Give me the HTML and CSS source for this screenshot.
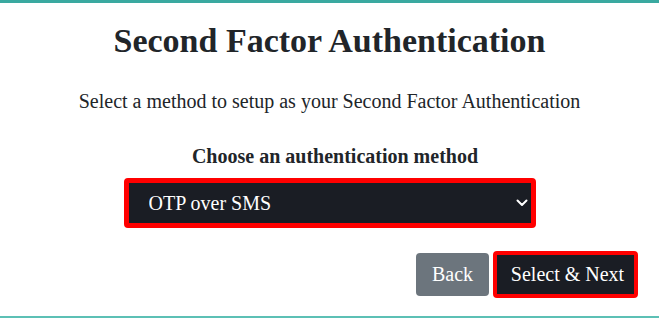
FILE: index.html
```html
<!DOCTYPE html>
<html>
<head>
<meta charset="utf-8">
<link rel="stylesheet" href="styles.css">
</head>
<body>
<div class="page">
  <h1 class="title">Second Factor Authentication</h1>
  <p class="subtitle">Select a method to setup as your Second Factor Authentication</p>
  <div class="field">
    <label class="label" for="method">Choose an authentication method</label>
    <div class="select-wrap">
      <select id="method" class="select">
        <option>OTP over SMS</option>
      </select>
      <svg class="chevron" width="12" height="8" viewBox="0 0 12 8"><path d="M1.5 1.5 L6 6 L10.5 1.5" fill="none" stroke="#fff" stroke-width="2" stroke-linecap="round" stroke-linejoin="round"/></svg>
    </div>
  </div>
  <div class="actions">
    <button class="btn btn-back">Back</button>
    <button class="btn btn-next">Select &amp; Next</button>
  </div>
</div>
</body>
</html>
```

FILE: styles.css
```css
html, body {
  margin: 0;
  padding: 0;
  background: #fff;
}
.page {
  box-sizing: border-box;
  width: 659px;
  height: 318px;
  border-top: 3px solid #3aa9a0;
  border-bottom: 2px solid #5cc0b5;
  font-family: "Liberation Serif", "Times New Roman", serif;
  color: #212529;
  display: flex;
  flex-direction: column;
  align-items: center;
  overflow: hidden;
}
.title {
  margin: 18px 0 0;
  font-size: 34px;
  font-weight: bold;
  line-height: 40px;
}
.subtitle {
  margin: 28px 0 0;
  font-size: 20px;
  line-height: 24px;
}
.field {
  margin-top: 31px;
  display: flex;
  flex-direction: column;
  align-items: center;
}
.label {
  margin-left: 11px;
  font-size: 20px;
  font-weight: bold;
  line-height: 24px;
}
.select-wrap {
  margin-top: 10px;
  position: relative;
  border: 5px solid #ff0000;
  border-radius: 4px;
  width: 402px;
  height: 40px;
  background: #1a1d24;
}
.select {
  appearance: none;
  -webkit-appearance: none;
  width: 100%;
  height: 100%;
  border: none;
  background: #1a1d24;
  color: #fff;
  font-family: "Liberation Serif", "Times New Roman", serif;
  font-size: 20px;
  padding: 0 0 0 20px;
  outline: none;
}
.chevron {
  position: absolute;
  right: 3px;
  top: 16px;
  pointer-events: none;
}
.actions {
  align-self: flex-end;
  margin: 23px 21px 0 0;
  display: flex;
  align-items: center;
  gap: 4px;
}
.btn {
  font-family: "Liberation Serif", "Times New Roman", serif;
  font-size: 20px;
  color: #fff;
  border-radius: 4px;
  cursor: pointer;
}
.btn-back {
  background: #6c757d;
  border: none;
  width: 73px;
  height: 43px;
}
.btn-next {
  background: #1a1d24;
  border: 4px solid #ff0000;
  width: 145px;
  height: 47px;
  padding: 0 0 0 4px;
}
```
